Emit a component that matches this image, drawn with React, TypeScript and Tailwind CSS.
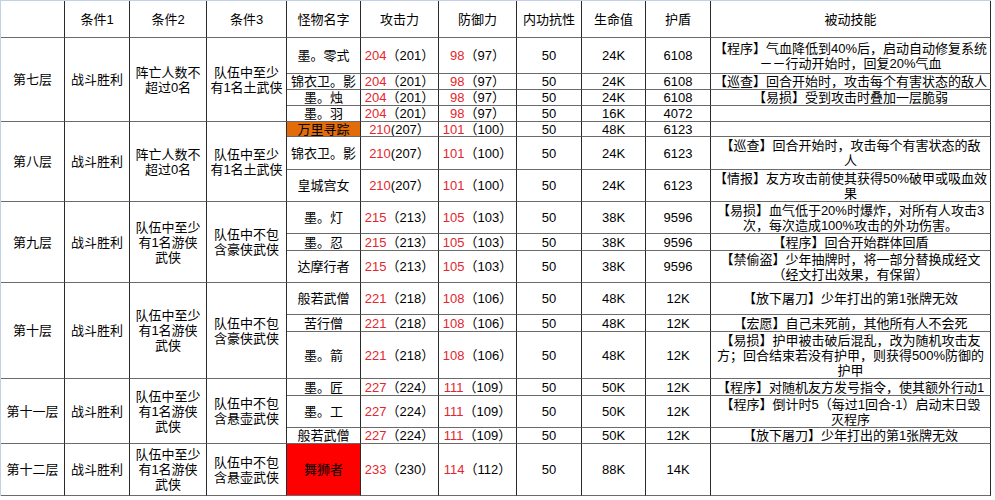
import React from 'react';

type Sub = {
  name: string;
  atk: [string, string];
  def: [string, string];
  nei: string;
  hp: string;
  sh: string;
  skill: string[];
  bg?: string;
};

type Floor = {
  name: string;
  c1: string;
  c2: string[];
  c3: string[];
  span: string;
  rows: Sub[];
};

const floors: Floor[] = [
  {
    name: '第七层',
    c1: '战斗胜利',
    c2: ['阵亡人数不', '超过0名'],
    c3: ['队伍中至少', '有1名土武侠'],
    span: 'row-span-4',
    rows: [
      { name: '墨。零式', atk: ['204', '（201）'], def: ['98', '（97）'], nei: '50', hp: '24K', sh: '6108', skill: ['【程序】气血降低到40%后，启动自动修复系统', '－－行动开始时，回复20%气血'] },
      { name: '锦衣卫。影', atk: ['204', '（201）'], def: ['98', '（97）'], nei: '50', hp: '24K', sh: '6108', skill: ['【巡查】回合开始时，攻击每个有害状态的敌人'] },
      { name: '墨。烛', atk: ['204', '（201）'], def: ['98', '（97）'], nei: '50', hp: '24K', sh: '6108', skill: ['【易损】受到攻击时叠加一层脆弱'] },
      { name: '墨。羽', atk: ['204', '（201）'], def: ['98', '（97）'], nei: '50', hp: '16K', sh: '4072', skill: [] },
    ],
  },
  {
    name: '第八层',
    c1: '战斗胜利',
    c2: ['阵亡人数不', '超过0名'],
    c3: ['队伍中至少', '有1名土武侠'],
    span: 'row-span-3',
    rows: [
      { name: '万里寻踪', atk: ['210', '(207）'], def: ['101', '（100）'], nei: '50', hp: '48K', sh: '6123', skill: [], bg: 'orange' },
      { name: '锦衣卫。影', atk: ['210', '(207）'], def: ['101', '（100）'], nei: '50', hp: '24K', sh: '6123', skill: ['【巡查】回合开始时，攻击每个有害状态的敌', '人'] },
      { name: '皇城宫女', atk: ['210', '(207）'], def: ['101', '（100）'], nei: '50', hp: '24K', sh: '6123', skill: ['【情报】友方攻击前使其获得50%破甲或吸血效', '果'] },
    ],
  },
  {
    name: '第九层',
    c1: '战斗胜利',
    c2: ['队伍中至少', '有1名游侠', '武侠'],
    c3: ['队伍中不包', '含豪侠武侠'],
    span: 'row-span-3',
    rows: [
      { name: '墨。灯', atk: ['215', '（213）'], def: ['105', '（103）'], nei: '50', hp: '38K', sh: '9596', skill: ['【易损】血气低于20%时爆炸，对所有人攻击3', '次，每次造成100%攻击的外功伤害。'] },
      { name: '墨。忍', atk: ['215', '（213）'], def: ['105', '（103）'], nei: '50', hp: '38K', sh: '9596', skill: ['【程序】回合开始群体回盾'] },
      { name: '达摩行者', atk: ['215', '（213）'], def: ['105', '（103）'], nei: '50', hp: '38K', sh: '9596', skill: ['【禁偷盗】少年抽牌时，将一部分替换成经文', '（经文打出效果，有保留）'] },
    ],
  },
  {
    name: '第十层',
    c1: '战斗胜利',
    c2: ['队伍中至少', '有1名游侠', '武侠'],
    c3: ['队伍中不包', '含豪侠武侠'],
    span: 'row-span-3',
    rows: [
      { name: '般若武僧', atk: ['221', '（218）'], def: ['108', '（106）'], nei: '50', hp: '48K', sh: '12K', skill: ['【放下屠刀】少年打出的第1张牌无效'] },
      { name: '苦行僧', atk: ['221', '（218）'], def: ['108', '（106）'], nei: '50', hp: '48K', sh: '12K', skill: ['【宏愿】自己未死前，其他所有人不会死'] },
      { name: '墨。箭', atk: ['221', '（218）'], def: ['108', '（106）'], nei: '50', hp: '48K', sh: '12K', skill: ['【易损】护甲被击破后混乱，改为随机攻击友', '方；回合结束若没有护甲，则获得500%防御的', '护甲'] },
    ],
  },
  {
    name: '第十一层',
    c1: '战斗胜利',
    c2: ['队伍中至少', '有1名游侠', '武侠'],
    c3: ['队伍中不包', '含悬壶武侠'],
    span: 'row-span-3',
    rows: [
      { name: '墨。匠', atk: ['227', '（224）'], def: ['111', '（109）'], nei: '50', hp: '50K', sh: '12K', skill: ['【程序】对随机友方发号指令，使其额外行动1'] },
      { name: '墨。工', atk: ['227', '（224）'], def: ['111', '（109）'], nei: '50', hp: '50K', sh: '12K', skill: ['【程序】倒计时5（每过1回合-1）启动末日毁', '灭程序'] },
      { name: '般若武僧', atk: ['227', '（224）'], def: ['111', '（109）'], nei: '50', hp: '50K', sh: '12K', skill: ['【放下屠刀】少年打出的第1张牌无效'] },
    ],
  },
  {
    name: '第十二层',
    c1: '战斗胜利',
    c2: ['队伍中至少', '有1名游侠', '武侠'],
    c3: ['队伍中不包', '含悬壶武侠'],
    span: 'row-span-1',
    rows: [
      { name: '舞狮者', atk: ['233', '（230）'], def: ['114', '（112）'], nei: '50', hp: '88K', sh: '14K', skill: [], bg: 'red' },
    ],
  },
];

const cell =
  'flex flex-col items-center justify-center text-center overflow-hidden whitespace-nowrap border-r border-b border-r-[#2b2b2b] border-b-[#6b6b6b] leading-[15px]';

function Lines({ lines }: { lines: string[] }) {
  return (
    <>
      {lines.map((l, i) => (
        <span key={i} className="block">
          {l}
        </span>
      ))}
    </>
  );
}

export default function App() {
  const headers = ['', '条件1', '条件2', '条件3', '怪物名字', '攻击力', '防御力', '内功抗性', '生命值', '护盾', '被动技能'];
  return (
    <div
      className="w-[995px] h-[500px] bg-white text-black text-[13px] overflow-hidden"
      style={{ fontFamily: '"Liberation Sans", "Noto Sans CJK SC", sans-serif' }}
    >
      <div className="grid w-[991px] border-t border-l border-t-[#c3d1e6] border-l-[#c3d1e6] grid-cols-[64px_65px_77px_80px_74px_78px_78px_65px_64px_65px_280px] grid-rows-[37px_36px_16px_16px_16px_15px_33px_32px_32px_17px_32px_32px_17px_47px_17px_32px_16px_52px]">
        {headers.map((h, i) => (
          <div key={'h' + i} className={cell}>
            {h}
          </div>
        ))}
        {floors.map((f, fi) => (
          <React.Fragment key={'f' + fi}>
            {f.rows.map((r, ri) => (
              <React.Fragment key={'r' + ri}>
                {ri === 0 && (
                  <>
                    <div className={`${cell} ${f.span}`}>{f.name}</div>
                    <div className={`${cell} ${f.span}`}>{f.c1}</div>
                    <div className={`${cell} ${f.span}`}>
                      <Lines lines={f.c2} />
                    </div>
                    <div className={`${cell} ${f.span}`}>
                      <Lines lines={f.c3} />
                    </div>
                  </>
                )}
                <div
                  className={`${cell} ${
                    r.bg === 'orange' ? 'bg-[#e36c0a]' : r.bg === 'red' ? 'bg-[#ff0000]' : ''
                  }`}
                >
                  {r.name}
                </div>
                <div className={cell}>
                  <span>
                    <span className="text-[#e3262e]">{r.atk[0]}</span>
                    {r.atk[1]}
                  </span>
                </div>
                <div className={cell}>
                  <span>
                    <span className="text-[#e3262e]">{r.def[0]}</span>
                    {r.def[1]}
                  </span>
                </div>
                <div className={cell}>{r.nei}</div>
                <div className={cell}>{r.hp}</div>
                <div className={cell}>{r.sh}</div>
                <div className={cell}>
                  <Lines lines={r.skill} />
                </div>
              </React.Fragment>
            ))}
          </React.Fragment>
        ))}
      </div>
    </div>
  );
}
